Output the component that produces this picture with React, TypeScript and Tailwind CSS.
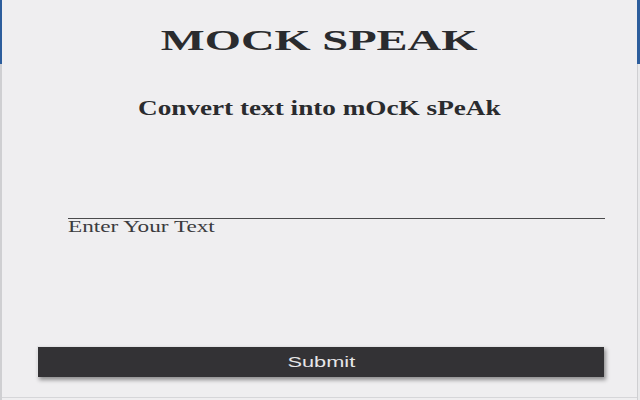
// Mock Speak — popup form for turning text into mOcK sPeAk

import { useState } from "react";

export default function App() {
  const [text, setText] = useState("");

  return (
    <div className="flex h-[400px] w-[640px] bg-[#efeef0] font-['Liberation_Serif',serif] text-[#2a2b2e]">
      <div className="flex w-[2px] flex-col">
        <div className="h-[64px] bg-[#2c5d9c]" />
        <div className="flex-1 bg-[#cfcfd2]" />
      </div>

      <div className="flex flex-1 flex-col">
        <h1 className="mt-[25px] flex h-[30px] justify-center text-[30px] font-bold leading-none">
          <span className="inline-block scale-x-[1.55]">MOCK SPEAK</span>
        </h1>

        <h2 className="mt-[43px] flex h-[20px] justify-center text-[20px] font-bold leading-none">
          <span className="inline-block scale-x-[1.36]">Convert text into mOcK sPeAk</span>
        </h2>

        <input
          value={text}
          onChange={(e) => setText(e.target.value)}
          className="ml-[66px] mt-[81px] h-[20px] w-[537px] border-b border-[#4a4a4c] bg-transparent text-[16px] outline-none"
        />
        <label className="ml-[66px] h-[16px] text-[16px] leading-none text-[#3b3b3e]">
          <span className="inline-block origin-left scale-x-[1.45]">Enter Your Text</span>
        </label>

        <button className="ml-[35px] mt-[111px] flex h-[31px] w-[567px] items-center justify-center border-l border-t border-[#e2e2e4] bg-[#333235] font-['Liberation_Sans',sans-serif] text-[15px] text-[#e6e6e8] shadow-[2px_3px_4px_rgba(0,0,0,0.4)]">
          <span className="inline-block scale-x-[1.45]">Submit</span>
        </button>

        <div className="mt-auto mb-[2px] h-px bg-[#d6d6d9]" />
      </div>

      <div className="flex w-[3px] flex-col">
        <div className="h-[64px] bg-[#2c5d9c]" />
        <div className="flex-1 border-l border-[#cfcfd2] bg-[#e9e9eb]" />
      </div>
    </div>
  );
}
